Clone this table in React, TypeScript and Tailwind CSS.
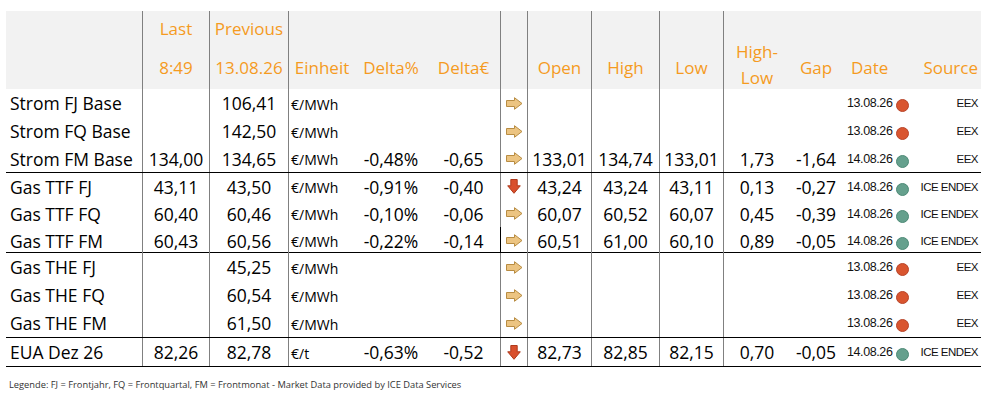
import React from 'react';

type Row = {
  name: string;
  last?: string;
  prev: string;
  unit: string;
  dPct?: string;
  dEur?: string;
  trend: 'right' | 'down';
  open?: string;
  high?: string;
  low?: string;
  hl?: string;
  gap?: string;
  date: string;
  fresh: boolean;
  source: string;
  h: string;
  groupEnd?: boolean;
  darkArrowEdge?: boolean;
};

const rows: Row[] = [
  { name: 'Strom FJ Base', prev: '106,41', unit: '€/MWh', trend: 'right', date: '13.08.26', fresh: false, source: 'EEX', h: 'h-[28px]' },
  { name: 'Strom FQ Base', prev: '142,50', unit: '€/MWh', trend: 'right', date: '13.08.26', fresh: false, source: 'EEX', h: 'h-[28px]' },
  { name: 'Strom FM Base', last: '134,00', prev: '134,65', unit: '€/MWh', dPct: '-0,48%', dEur: '-0,65', trend: 'right', open: '133,01', high: '134,74', low: '133,01', hl: '1,73', gap: '-1,64', date: '14.08.26', fresh: true, source: 'EEX', h: 'h-[28px]', groupEnd: true },
  { name: 'Gas TTF FJ', last: '43,11', prev: '43,50', unit: '€/MWh', dPct: '-0,91%', dEur: '-0,40', trend: 'down', open: '43,24', high: '43,24', low: '43,11', hl: '0,13', gap: '-0,27', date: '14.08.26', fresh: true, source: 'ICE ENDEX', h: 'h-[27px]' },
  { name: 'Gas TTF FQ', last: '60,40', prev: '60,46', unit: '€/MWh', dPct: '-0,10%', dEur: '-0,06', trend: 'right', open: '60,07', high: '60,52', low: '60,07', hl: '0,45', gap: '-0,39', date: '14.08.26', fresh: true, source: 'ICE ENDEX', h: 'h-[27px]' },
  { name: 'Gas TTF FM', last: '60,43', prev: '60,56', unit: '€/MWh', dPct: '-0,22%', dEur: '-0,14', trend: 'right', open: '60,51', high: '61,00', low: '60,10', hl: '0,89', gap: '-0,05', date: '14.08.26', fresh: true, source: 'ICE ENDEX', h: 'h-[26px]', groupEnd: true, darkArrowEdge: true },
  { name: 'Gas THE FJ', prev: '45,25', unit: '€/MWh', trend: 'right', date: '13.08.26', fresh: false, source: 'EEX', h: 'h-[28px]' },
  { name: 'Gas THE FQ', prev: '60,54', unit: '€/MWh', trend: 'right', date: '13.08.26', fresh: false, source: 'EEX', h: 'h-[28px]' },
  { name: 'Gas THE FM', prev: '61,50', unit: '€/MWh', trend: 'right', date: '13.08.26', fresh: false, source: 'EEX', h: 'h-[29px]', groupEnd: true },
  { name: 'EUA Dez 26', last: '82,26', prev: '82,78', unit: '€/t', dPct: '-0,63%', dEur: '-0,52', trend: 'down', open: '82,73', high: '82,85', low: '82,15', hl: '0,70', gap: '-0,05', date: '14.08.26', fresh: true, source: 'ICE ENDEX', h: 'h-[29px]', groupEnd: true },
];

// column template shared by header and body
const cols =
  'grid grid-cols-[136px_67px_79px_67px_72px_73px_27px_64px_68px_64px_67px_52px_72px_67px]';

const ArrowRight = () => (
  <svg width="17" height="13" viewBox="0 0 17 13">
    <path d="M0.5 3.5H8.5V0.7L16 6.5L8.5 12.3V9.5H0.5Z" fill="#ecc481" stroke="#b88c42" strokeWidth="1" strokeLinejoin="round" />
  </svg>
);

const ArrowDown = () => (
  <svg width="14" height="15" viewBox="0 0 14 15">
    <path d="M3.8 0.5H10.2V6.8H13.3L7 14.3L0.7 6.8H3.8Z" fill="#d9502d" stroke="#b03a1c" strokeWidth="1" strokeLinejoin="round" />
  </svg>
);

const Dot = ({ fresh }: { fresh: boolean }) => (
  <span
    className={
      fresh
        ? 'mt-[4px] inline-block h-[13px] w-[13px] rounded-full border border-[#4d8a76] bg-[#65a08d]'
        : 'mt-[4px] inline-block h-[13px] w-[13px] rounded-full border border-[#b8452a] bg-[#d9552f]'
    }
  />
);

const vline = 'border-l border-[#808080]';

function HeaderCell({ top, bottom, border }: { top?: string; bottom?: React.ReactNode; border?: boolean }) {
  return (
    <div className={`flex flex-col ${border ? vline : ''}`}>
      <div className="flex h-[36px] items-center justify-center">{top}</div>
      <div className="flex h-[42px] items-center justify-center">{bottom}</div>
    </div>
  );
}

export default function App() {
  return (
    <div
      className="min-h-screen bg-white pl-[6px] pt-[11px] text-black"
      style={{ fontFamily: '"Open Sans", "Noto Sans", sans-serif' }}
    >
      <div className="w-[975px]">
        {/* header */}
        <div className={`${cols} h-[78px] bg-[#f2f2f2] text-[17px] text-[#f59b1f]`}>
          <HeaderCell />
          <HeaderCell border top="Last" bottom="8:49" />
          <HeaderCell border top="Previous" bottom="13.08.26" />
          <HeaderCell border bottom="Einheit" />
          <HeaderCell bottom="Delta%" />
          <HeaderCell bottom="Delta€" />
          <HeaderCell border />
          <HeaderCell border bottom="Open" />
          <HeaderCell border bottom="High" />
          <HeaderCell border bottom="Low" />
          <div className={`${vline} pt-[28px] text-center leading-[26px]`}>
            High-
            <br />
            Low
          </div>
          <HeaderCell bottom="Gap" />
          <div className="flex flex-col">
            <div className="h-[36px]" />
            <div className="flex h-[42px] items-center pl-[9px]">Date</div>
          </div>
          <div className="flex flex-col">
            <div className="h-[36px]" />
            <div className="flex h-[42px] items-center justify-end pr-[3px]">Source</div>
          </div>
        </div>

        {/* body */}
        {rows.map((r) => (
          <div
            key={r.name}
            className={`${cols} ${r.h} text-[17.5px] ${r.groupEnd ? 'border-b border-black' : ''}`}
          >
            <div className="flex items-center pl-[4px] pt-[1px] whitespace-nowrap">{r.name}</div>
            <div className={`${vline} flex items-center justify-center pt-[1px]`}>{r.last}</div>
            <div className={`${vline} flex items-center justify-center pt-[1px]`}>{r.prev}</div>
            <div className={`${vline} flex items-center pl-[2px] pt-[2px] text-[14px]`}>{r.unit}</div>
            <div className="flex items-center justify-center pt-[1px]">{r.dPct}</div>
            <div className="flex items-center justify-center pt-[1px]">{r.dEur}</div>
            <div
              className={`flex items-center justify-center border-l ${r.darkArrowEdge ? 'border-black' : 'border-[#808080]'}`}
            >
              {r.trend === 'right' ? <ArrowRight /> : <ArrowDown />}
            </div>
            <div className={`${vline} flex items-center justify-center pt-[1px]`}>{r.open}</div>
            <div className={`${vline} flex items-center justify-center pt-[1px]`}>{r.high}</div>
            <div className={`${vline} flex items-center justify-center pt-[1px]`}>{r.low}</div>
            <div className={`${vline} flex items-center justify-center pt-[1px]`}>{r.hl}</div>
            <div className="flex items-center justify-center pt-[1px]">{r.gap}</div>
            <div
              className="flex items-center gap-[4px] pl-[5px] pt-[1px] text-[12.5px] text-[#111]"
              style={{ fontFamily: '"Liberation Sans", Arial, sans-serif' }}
            >
              <span className="tracking-[-0.4px]">{r.date}</span>
              <Dot fresh={r.fresh} />
            </div>
            <div
              className="flex items-center justify-end pr-[3px] pt-[1px] text-[11.5px] tracking-[-0.5px] text-[#111]"
              style={{ fontFamily: '"Liberation Sans", Arial, sans-serif' }}
            >
              {r.source}
            </div>
          </div>
        ))}

        <div className="pl-[3px] pt-[11px] text-[9.3px] text-[#333]">
          Legende: FJ = Frontjahr, FQ = Frontquartal, FM = Frontmonat - Market Data provided by ICE Data Services
        </div>
      </div>
    </div>
  );
}
